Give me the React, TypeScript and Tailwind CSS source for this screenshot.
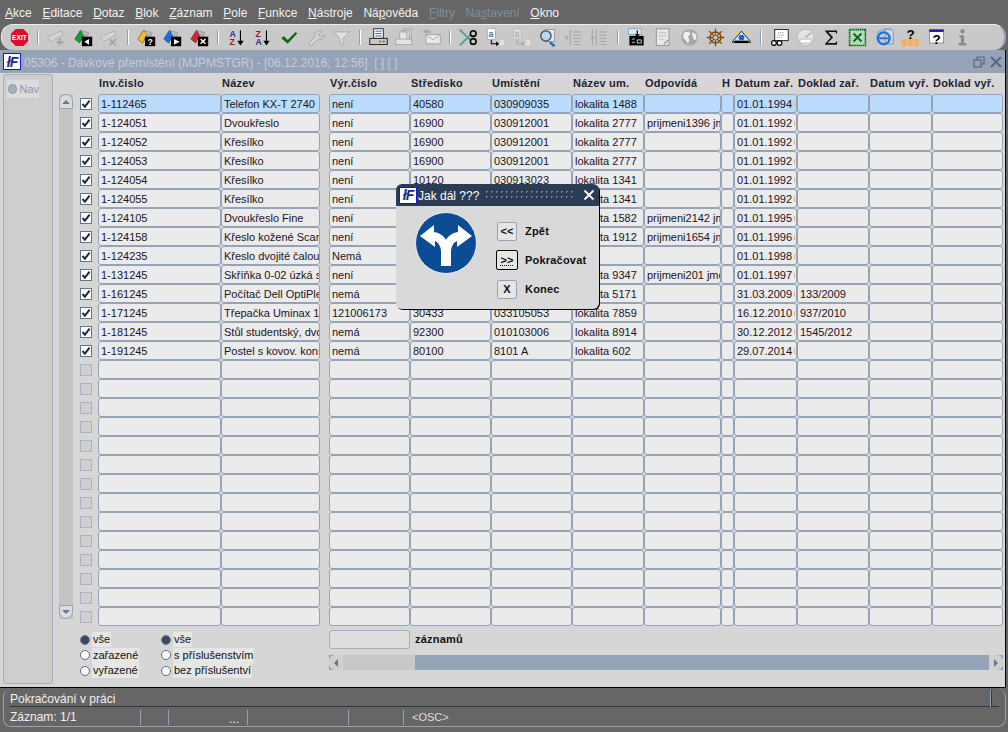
import React from 'react'

type Row = string[]

const ICON = 19

const menu: [string, string, string, boolean?][] = [
  ['', 'A', 'kce'], ['', 'E', 'ditace'], ['', 'D', 'otaz'], ['', 'B', 'lok'], ['', 'Z', 'áznam'], ['', 'P', 'ole'],
  ['', 'F', 'unkce'], ['', 'N', 'ástroje'], ['Ná', 'p', 'ověda'], ['', 'F', 'iltry', true], ['Na', 's', 'tavení', true], ['', 'O', 'kno'],
]

const columns = [
  { title: 'Inv.čislo', w: 'w-[123px]' },
  { title: 'Název', w: 'w-[99px] mr-[9px]' },
  { title: 'Výr.čislo', w: 'w-[81px]' },
  { title: 'Středisko', w: 'w-[81px]' },
  { title: 'Umístění', w: 'w-[81px]' },
  { title: 'Název um.', w: 'w-[72px]' },
  { title: 'Odpovídá', w: 'w-[77px]' },
  { title: 'H', w: 'w-[13px]' },
  { title: 'Datum zař.', w: 'w-[63px]' },
  { title: 'Doklad zař.', w: 'w-[72px]' },
  { title: 'Datum vyř.', w: 'w-[63px]' },
  { title: 'Doklad vyř.', w: 'w-[71px]' },
]

const rows: Row[] = [
  ['1-112465', 'Telefon KX-T 2740', 'není', '40580', '030909035', 'lokalita 1488', '', '', '01.01.1994', ''],
  ['1-124051', 'Dvoukřeslo', 'není', '16900', '030912001', 'lokalita 2777', 'prijmeni1396 jmeno', '', '01.01.1992', ''],
  ['1-124052', 'Křesílko', 'není', '16900', '030912001', 'lokalita 2777', '', '', '01.01.1992', ''],
  ['1-124053', 'Křesílko', 'není', '16900', '030912001', 'lokalita 2777', '', '', '01.01.1992', ''],
  ['1-124054', 'Křesílko', 'není', '10120', '030913023', 'lokalita 1341', '', '', '01.01.1992', ''],
  ['1-124055', 'Křesílko', 'není', '10120', '030913023', 'lokalita 1341', '', '', '01.01.1992', ''],
  ['1-124105', 'Dvoukřeslo Fine', 'není', '10120', '030913023', 'lokalita 1582', 'prijmeni2142 jmeno', '', '01.01.1995', ''],
  ['1-124158', 'Křeslo kožené Scandi', 'není', '10120', '030913023', 'lokalita 1912', 'prijmeni1654 jmeno', '', '01.01.1996', ''],
  ['1-124235', 'Křeslo dvojité čalounené', 'Nemá', '', '', '', '', '', '01.01.1998', ''],
  ['1-131245', 'Skříňka 0-02 úzká s dveřmi', 'není', '10120', '030913023', 'lokalita 9347', 'prijmeni201 jmeno', '', '01.01.1997', ''],
  ['1-161245', 'Počítač Dell OptiPlex 7010', 'nemá', '10120', '030913023', 'lokalita 5171', '', '', '31.03.2009', '133/2009'],
  ['1-171245', 'Třepačka Uminax 10', '121006173', '30433', '033105053', 'lokalita 7859', '', '', '16.12.2010', '937/2010'],
  ['1-181245', 'Stůl studentský, dvoumístný', 'nemá', '92300', '010103006', 'lokalita 8914', '', '', '30.12.2012', '1545/2012'],
  ['1-191245', 'Postel s kovov. konstrukcí', 'nemá', '80100', '8101 A', 'lokalita 602', '', '', '29.07.2014', ''],
]

const Logo = () => (
  <div className="w-[18px] h-[17px] shrink-0 bg-white border border-[#1818c8] flex items-center justify-center overflow-hidden">
    <span className="text-[#1a2a90] font-bold italic text-[14px] leading-none tracking-[-1px]">łF</span>
  </div>
)

const Card = ({ color, glyph }: { color: string, glyph: React.ReactNode }) => (
  <svg width={ICON} height={ICON} viewBox="0 0 24 24">
    <polygon points="1,14 8,3 14,7 7,19" fill={color} stroke="#222" strokeWidth="0.6" />
    <polygon points="9,3 19,6 17,11 12,9" fill="#b8b8b8" stroke="#444" strokeWidth="0.6" strokeDasharray="1 1" />
    <rect x="10" y="11" width="13" height="12" fill="#000" />
    {glyph}
  </svg>
)

const DimCard = ({ glyph }: { glyph: React.ReactNode }) => (
  <svg width={ICON} height={ICON} viewBox="0 0 24 24">
    <polygon points="1,12 18,4 20,9 4,17" fill="#dedede" stroke="#a8a8a8" strokeWidth="1" />
    <line x1="4" y1="14" x2="18" y2="8" stroke="#a8a8a8" strokeDasharray="2 1" />
    {glyph}
  </svg>
)

const Sort = ({ top, bottom, c1, c2 }: { top: string, bottom: string, c1: string, c2: string }) => (
  <svg width={ICON} height={ICON} viewBox="0 0 24 24" fontFamily="'Liberation Sans', sans-serif" fontWeight="700" fontSize="11">
    <text x="3" y="11" fill={c1}>{top}</text>
    <text x="3" y="22" fill={c2}>{bottom}</text>
    <line x1="17" y1="3" x2="17" y2="18" stroke="#000" strokeWidth="1.4" />
    <polygon points="13,16 21,16 17,22" fill="#000" />
  </svg>
)

const Svg = ({ children }: { children: React.ReactNode }) => (
  <svg width={ICON} height={ICON} viewBox="0 0 24 24">{children}</svg>
)

const Exit = () => (
  <svg width="19" height="19" viewBox="0 0 20 20">
    <polygon points="6,1 14,1 19,6 19,14 14,19 6,19 1,14 1,6" fill="#d8102c" />
    <text x="10" y="12.6" textAnchor="middle" fontSize="7" fontWeight="700" fill="#fff" fontFamily="'Liberation Sans', sans-serif">EXIT</text>
  </svg>
)

const AtoA = ({ dim }: { dim?: boolean }) => (
  <svg width={ICON} height={ICON} viewBox="0 0 24 24" fontFamily="'Liberation Sans', sans-serif" fontSize="11">
    <rect x="3" y="1" width="10" height="13" fill={dim ? '#d8d8d8' : '#fff'} stroke={dim ? '#b0b0b0' : '#888'} strokeWidth="0.6" />
    <text x="4.5" y="11" fill={dim ? '#a8a8a8' : '#2030c0'}>a</text>
    <path d="M8 15v5h7" fill="none" stroke={dim ? '#a8a8a8' : '#000'} strokeWidth="1.3" />
    <polygon points="14,17 18,20 14,23" fill={dim ? '#a8a8a8' : '#000'} />
    <text x="18" y="22" fill="#f4f4f4">a</text>
  </svg>
)

const ListIcon = ({ double }: { double?: boolean }) => (
  <Svg>
    <path d="M8 2v20M12 5h9M12 9h9M12 13h9M12 17h9M12 21h9" stroke="#a4a4a4" strokeWidth="1.2" fill="none" />
    <polygon points="2,9 6,12 2,15" fill="#a4a4a4" />
    {double && <path d="M3 2v20" stroke="#a4a4a4" strokeWidth="1.2" />}
  </Svg>
)

type Tool = React.ReactNode | 'sep'

const tools: Tool[] = [
  <Exit />,
  'sep',
  <DimCard glyph={<path d="M16 13v9M12 18h9" stroke="#a4a4a4" strokeWidth="2.4" />} />,
  <Card color="#10a030" glyph={<polygon points="19,14 19,21 13,17.5" fill="#fff" />} />,
  <DimCard glyph={<path d="M12 14l8 8M20 14l-8 8" stroke="#a4a4a4" strokeWidth="2" />} />,
  'sep',
  <Card color="#f4c020" glyph={<text x="16.5" y="21.5" textAnchor="middle" fontSize="11" fontWeight="700" fill="#fff" fontFamily="'Liberation Sans', sans-serif">?</text>} />,
  <Card color="#1870e8" glyph={<polygon points="14,14 21,17.5 14,21" fill="#fff" />} />,
  <Card color="#e02030" glyph={<path d="M13.5 14l6 6M19.5 14l-6 6" stroke="#fff" strokeWidth="1.8" />} />,
  'sep',
  <Sort top="A" bottom="Z" c1="#1a2ca0" c2="#b01828" />,
  <Sort top="Z" bottom="A" c1="#a01028" c2="#1a2ca0" />,
  <Svg><path d="M3 13l3-3 5 5L21 5l2 2-12 13z" fill="#0c6a18" /></Svg>,
  <Svg><path d="M20 4l-4 4 1 3 3 0 3-3c1 4-3 8-7 6L6 23l-3-3 9-10c-2-4 3-8 8-6z" fill="#d4d4d4" stroke="#9c9c9c" /></Svg>,
  <Svg><polygon points="2,5 22,5 14,13 14,21 10,19 10,13" fill="#e0e0e0" stroke="#a4a4a4" /></Svg>,
  'sep',
  <Svg>
    <rect x="6" y="1" width="12" height="12" fill="#fff" stroke="#000" />
    <path d="M8 4h8M8 7h8M8 10h8" stroke="#1830a0" />
    <rect x="1" y="13" width="22" height="8" fill="#c8c8c8" stroke="#000" />
    <path d="M13 17h2" stroke="#e02020" strokeWidth="2" /><path d="M15 17h2" stroke="#f0d020" strokeWidth="2" /><path d="M17 17h3" stroke="#20a030" strokeWidth="2" />
  </Svg>,
  <Svg>
    <rect x="12" y="1" width="9" height="11" fill="#d8d8d8" stroke="#a0a0a0" />
    <rect x="9" y="3" width="9" height="11" fill="#d8d8d8" stroke="#a0a0a0" />
    <rect x="6" y="5" width="9" height="10" fill="#e4e4e4" stroke="#a0a0a0" />
    <rect x="1" y="14" width="20" height="7" fill="#e4e4e4" stroke="#a0a0a0" />
  </Svg>,
  <Svg>
    <rect x="5" y="8" width="18" height="12" fill="#e8e8e8" stroke="#9c9c9c" />
    <path d="M5 8l9 7 9-7" fill="none" stroke="#9c9c9c" />
    <polygon points="1,4 6,1 6,3 11,3 11,6 6,6 6,8" fill="#a8a8a8" />
  </Svg>,
  'sep',
  <Svg>
    <path d="M1 2l14 14M1 22L15 8" stroke="#5a9c9c" strokeWidth="2.4" />
    <circle cx="18" cy="7" r="3.6" fill="none" stroke="#000" strokeWidth="2" />
    <circle cx="18" cy="17" r="3.6" fill="none" stroke="#000" strokeWidth="2" />
  </Svg>,
  <AtoA />,
  <AtoA dim />,
  <Svg>
    <rect x="9" y="2" width="12" height="15" fill="#e8e8e8" stroke="#909090" />
    <path d="M15 18l6 5" stroke="#1878c8" strokeWidth="3.4" />
    <circle cx="10" cy="10" r="6.5" fill="#b8d8f0" stroke="#404858" strokeWidth="1.6" />
  </Svg>,
  <ListIcon />,
  <ListIcon double />,
  'sep',
  <Svg>
    <rect x="2" y="1" width="16" height="7" fill="#e8e8e8" stroke="#60a8d8" />
    <rect x="3" y="10" width="18" height="12" fill="#000" />
    <path d="M6 14h4M6 18h4M13 15h5v4h-5z" stroke="#fff" fill="none" />
    <path d="M13 3v7" stroke="#000" strokeWidth="1.6" /><polygon points="10,8 16,8 13,12" fill="#000" />
  </Svg>,
  <Svg>
    <rect x="3" y="1" width="16" height="21" fill="#e8e8e8" stroke="#9c9c9c" strokeWidth="1.4" />
    <path d="M6 6h10M6 10h10M6 14h6" stroke="#b0b0b0" />
    <path d="M13 20l5-5" stroke="#8c8c8c" strokeWidth="1.6" />
  </Svg>,
  <Svg>
    <circle cx="12" cy="12" r="10.5" fill="#a8a8a8" />
    <path d="M5 6l6-2 2 4-3 3 2 4-2 5-3-5-3-3zM15 5l5 3 1 6-3 1-2-4z" fill="#f0f0f0" />
  </Svg>,
  <Svg>
    <circle cx="12" cy="12" r="7" fill="none" stroke="#804808" strokeWidth="1.8" />
    <path d="M12 1v22M1 12h22M4 4l16 16M20 4L4 20" stroke="#804808" strokeWidth="1.6" />
    <circle cx="12" cy="12" r="3" fill="#c8c8c8" stroke="#804808" />
  </Svg>,
  <Svg>
    <path d="M5 5l3 3M19 5l-3 3M12 1v3" stroke="#f0e020" strokeWidth="1.4" />
    <polygon points="12,4 24,18 0,18" fill="#d8e4e8" stroke="#000" />
    <circle cx="12" cy="12" r="3.6" fill="#1060f0" />
    <rect x="3" y="16" width="18" height="3" fill="#000" />
  </Svg>,
  'sep',
  <Svg>
    <rect x="6" y="2" width="17" height="14" fill="#fff" stroke="#000" />
    <path d="M10 6h8M9 9h9M9 12h5" stroke="#808080" strokeDasharray="1.4 1" />
    <circle cx="5" cy="19" r="3" fill="#fff" stroke="#000" strokeWidth="1.4" />
    <circle cx="12" cy="19" r="3" fill="#fff" stroke="#000" strokeWidth="1.4" />
  </Svg>,
  <Svg>
    <circle cx="12" cy="12" r="10.5" fill="#e4e4e4" stroke="#b0b0b0" />
    <path d="M12 12L19 6" stroke="#a0a0a0" strokeWidth="1.4" />
    <rect x="5" y="14" width="14" height="5" fill="#fff" stroke="#b0b0b0" />
  </Svg>,
  <Svg><path d="M4 3h15v5l-2-3H8l6 7-7 7h10l2-3v5H4v-1l7-8-7-8z" fill="#111" /></Svg>,
  <Svg>
    <rect x="2" y="2" width="20" height="20" fill="#b8d8b8" stroke="#0c6a28" strokeWidth="2" strokeDasharray="2 0.6" />
    <path d="M7 7l10 10M17 7L7 17" stroke="#0c6a28" strokeWidth="2.4" />
  </Svg>,
  <Svg>
    <path d="M13 1h7l3 3v16H13z" fill="#d8d8e8" stroke="#8080a0" />
    <circle cx="11" cy="13" r="7.5" fill="none" stroke="#1878d8" strokeWidth="3" />
    <path d="M5 13h12" stroke="#1878d8" strokeWidth="2.4" />
    <path d="M2 7c6-6 14-6 18-4" fill="none" stroke="#60a8e8" strokeWidth="1.2" />
  </Svg>,
  <Svg>
    <rect x="1" y="14" width="6" height="9" fill="#f0b060" />
    <rect x="17" y="14" width="6" height="9" fill="#f0b060" />
    <rect x="9" y="14" width="6" height="9" fill="#f0b060" />
    <text x="12" y="14" textAnchor="middle" fontSize="17" fontWeight="700" fill="#000" fontFamily="'Liberation Sans', sans-serif">?</text>
  </Svg>,
  <Svg>
    <rect x="3" y="2" width="18" height="17" fill="#fff" stroke="#808080" />
    <rect x="3" y="2" width="18" height="3" fill="#3010a0" />
    <text x="12" y="20" textAnchor="middle" fontSize="17" fontWeight="700" fill="#000" fontFamily="'Liberation Sans', sans-serif">?</text>
  </Svg>,
  <Svg>
    <circle cx="12" cy="4" r="2.8" fill="#8c8c8c" />
    <path d="M8 9h6v10h3v3H7v-3h3v-7H8z" fill="#8c8c8c" />
  </Svg>,
]

const Radio = ({ on, label }: { on?: boolean, label: string }) => (
  <div className="flex items-center h-[15.5px]">
    <span className="w-[10px] h-[10px] rounded-full border border-[#5c6c84] bg-white flex items-center justify-center shrink-0">
      {on && <span className="w-[8px] h-[8px] rounded-full bg-[#3c465c]" />}
    </span>
    <span className="ml-[2px] px-[1px] bg-[#e6e6e6] text-[11px] leading-[15px] text-[#111]">{label}</span>
  </div>
)

const Check = ({ on }: { on: boolean }) => (
  <div className={on ? 'w-[12px] h-[12px] border border-[#64748c] bg-white flex items-center justify-center' : 'w-[12px] h-[12px] border border-[#a9b3c2] bg-[#cfcfcf]'}>
    {on && (
      <svg width="10" height="10" viewBox="0 0 10 10">
        <path d="M1.5 5l2.4 2.6L8.6 1.6" fill="none" stroke="#1f2a3c" strokeWidth="2" />
      </svg>
    )}
  </div>
)

const DialogButton = ({ label, text, focused }: { label: string, text: string, focused?: boolean }) => (
  <div className="flex items-center h-[20px]">
    <div className={focused
      ? 'w-[22px] h-[20px] -ml-px mr-[7px] flex items-center justify-center bg-[#e6e6e6] border border-black rounded-[2px] text-[11px] font-bold underline decoration-dotted text-[#111]'
      : 'w-[20px] h-[19px] mr-[8px] flex items-center justify-center bg-[#e6e6e6] border border-[#94a3b8] rounded-[2px] text-[11px] font-bold text-[#111]'}
    >
      {label}
    </div>
    <span className="text-[11px] font-bold tracking-[0.2px] text-[#111]">{text}</span>
  </div>
)

export default function App() {
  return (
    <div className="w-[1008px] h-[732px] relative overflow-hidden flex flex-col bg-[#666666] font-['Liberation_Sans',Arial,sans-serif] text-[11px]">
      {/* menu */}
      <div className="h-[24px] pl-[5px] pt-[2px] flex items-center gap-[10.7px] text-[12px] text-[#f2f2f2] shrink-0">
        {menu.map(([pre, key, rest, dim], i) => (
          <span key={i} className={dim ? 'text-[#7f8e9e]' : ''}>
            {pre}
            <span className="underline">{key}</span>
            {rest}
          </span>
        ))}
      </div>

      {/* toolbar */}
      <div className="h-[26px] ml-px mr-[2px] pl-[4.5px] flex items-center rounded-[12px] bg-[#c9c9c9] border-t border-l border-t-[#eeeeee] border-l-[#eeeeee] border-r-2 border-r-[#94a3b8] shrink-0">
        {tools.map((t, i) => t === 'sep'
          ? (
              <div key={i} className="w-[11px] flex justify-center shrink-0">
                <div className="w-[2px] h-[15px] bg-[#8ea0b8] border-r border-r-white" />
              </div>
            )
          : (
              <div key={i} className="w-[26.25px] h-[24px] flex items-center justify-center shrink-0">{t}</div>
            ))}
      </div>

      {/* window */}
      <div className="h-[638px] flex flex-col mr-[2px] bg-[#d6d6d6] border-b border-b-black border-r border-r-black shrink-0">
        <div className="h-[23px] pl-[3px] pr-[3px] flex items-center bg-[#94a3b7] shrink-0">
          <Logo />
          <span className="ml-[3px] pt-[2px] text-[12px] text-[#c6ccd6] whitespace-pre">05306 - Dávkové přemístění (MJPMSTGR) - [06.12.2016; 12:56]  [ ] [ ]</span>
          <div className="ml-auto flex items-center gap-[5px]">
            <svg width="12" height="12" viewBox="0 0 12 12" fill="none" stroke="#5a6678" strokeWidth="1.2">
              <rect x="1" y="4" width="7" height="7" />
              <path d="M4 4V1h7v7H8" />
            </svg>
            <svg width="12" height="12" viewBox="0 0 12 12" stroke="#5a6678" strokeWidth="2">
              <path d="M1 1l10 10M11 1L1 11" />
            </svg>
          </div>
        </div>

        <div className="flex-1 flex min-h-0">
          {/* Nav panel */}
          <div className="w-[50px] ml-[3px] mt-px mb-[3px] rounded-[3px] border border-[#a4b0c0] bg-[#cecece] shrink-0 pt-[5px] pl-[3px]">
            <div className="w-[32px] h-[18px] bg-[#dcdcdc] flex items-center gap-[2px]">
              <span className="ml-px w-[10px] h-[10px] rounded-full border border-[#8c98a8] bg-[#a8b0bc]" />
              <span className="text-[11px] text-[#8a96a6]">Nav</span>
            </div>
          </div>

          <div className="flex-1 flex flex-col">
            {/* header */}
            <div className="h-[21px] pl-[45px] flex items-start pt-[2px] font-bold text-[11px] tracking-[0.2px] text-[#1d2433] shrink-0">
              {columns.map(c => (
                <div key={c.title} className={c.w + ' pl-[1px] whitespace-nowrap'}>{c.title}</div>
              ))}
            </div>

            {/* rows */}
            <div className="flex pl-[6px]">
              <div className="w-[14px] h-[525px] bg-[#c4c4c4] flex flex-col justify-between">
                <div className="h-[15px] bg-[#dcdcdc] rounded-t-[7px] border border-[#94a3b8] flex items-center justify-center">
                  <div className="w-0 h-0 border-x-[4px] border-x-transparent border-b-[4px] border-b-[#667890]" />
                </div>
                <div className="h-[14px] bg-[#dcdcdc] rounded-b-[7px] border border-[#94a3b8] flex items-center justify-center">
                  <div className="w-0 h-0 border-x-[4px] border-x-transparent border-t-[4px] border-t-[#667890]" />
                </div>
              </div>
              <div className="ml-[7px] flex flex-col">
                {Array.from({ length: 28 }).map((_, r) => {
                  const row = rows[r]
                  return (
                    <div key={r} className="flex items-center h-[19px]">
                      <div className="w-[18px] shrink-0"><Check on={!!row} /></div>
                      {columns.map((c, i) => (
                        <div key={c.title} className={c.w + (r === 0 ? ' bg-[#bbdcfd]' : ' bg-[#ebebeb]') + ' h-[19px] border border-[#94a3b8] rounded-[3px] pl-[2px] pt-px flex items-center overflow-hidden whitespace-nowrap text-[11px] text-[#1c1424]'}>
                          {row?.[i] ?? ''}
                          {row && i === 8 && <span className="ml-auto mr-px w-px h-[5px] bg-[#e8b070] shrink-0" />}
                        </div>
                      ))}
                    </div>
                  )
                })}
              </div>
            </div>

            {/* bottom */}
            <div className="flex pl-[27px]">
              <div className="w-[81px] pt-[6px]">
                <Radio on label="vše" />
                <Radio label="zařazené" />
                <Radio label="vyřazené" />
              </div>
              <div className="w-[168px] pt-[6px]">
                <Radio on label="vše" />
                <Radio label="s příslušenstvím" />
                <Radio label="bez příslušentví" />
              </div>
              <div className="w-[674px] pt-[3px]">
                <div className="flex items-center h-[20px]">
                  <div className="w-[81px] h-[19px] rounded-[3px] border border-[#a4b0c0] bg-[#dedede]" />
                  <span className="ml-[5px] font-bold text-[11px] tracking-[0.2px] text-[#111]">záznamů</span>
                </div>
                <div className="mt-[6px] h-[15px] flex bg-[#94a3b7]">
                  <div className="w-[14px] bg-[#d0d0d0] rounded-l-[6px] flex items-center justify-center">
                    <div className="w-0 h-0 border-y-[4px] border-y-transparent border-r-[4px] border-r-[#667890]" />
                  </div>
                  <div className="w-[72px] bg-[#c8c8c8]" />
                  <div className="ml-auto w-[14px] bg-[#d0d0d0] rounded-r-[6px] flex items-center justify-center">
                    <div className="w-0 h-0 border-y-[4px] border-y-transparent border-l-[4px] border-l-[#667890]" />
                  </div>
                </div>
              </div>
            </div>
          </div>
        </div>
      </div>

      {/* status */}
      <div className="h-[44px] pt-px pb-[5px] pl-[3px] pr-[2px] shrink-0">
        <div className="h-full rounded-[8px] border-l border-r border-b border-[#94a3b8] border-t-0 pl-[6px] pr-[6px] text-[12px] text-[#f0f0f0] flex flex-col">
          <div className="h-[18px] pt-[2px] flex items-center border-b border-b-[#2c3648] shrink-0">
            <span>Pokračování v práci</span>
            <div className="ml-auto mr-[7px] w-[2px] h-[17px] border-l border-l-[#94a3b8] border-r border-r-[#2c3648]" />
          </div>
          <div className="flex-1 pt-px flex items-center">
            <div className="w-[130px] shrink-0">Záznam: 1/1</div>
            <div className="w-[28px] h-[15px] border-l border-l-[#94a3b8] shrink-0" />
            <div className="w-[79px] h-[15px] border-l border-l-[#94a3b8] flex items-end justify-end pr-[8px] leading-none shrink-0">...</div>
            <div className="w-[101px] h-[15px] border-l border-l-[#94a3b8] shrink-0" />
            <div className="w-[55px] h-[15px] border-l border-l-[#94a3b8] shrink-0" />
            <div className="h-[15px] border-l border-l-[#94a3b8] pl-[8px] leading-[15px] text-[#dedede] text-[11px]">&lt;OSC&gt;</div>
          </div>
        </div>
      </div>

      {/* dialog */}
      <div className="absolute left-[396px] top-[184px] w-[203px] h-[125px] rounded-[6px] bg-[#d9d9d9] overflow-hidden shadow-[1px_1px_0_#000] flex flex-col">
        <div className="h-[22px] bg-[#2c3c55] flex items-center pl-[3px] pr-[4px] shrink-0">
          <Logo />
          <span className="ml-px pt-[2px] text-[12px] text-white whitespace-nowrap">Jak dál ???</span>
          <div className="ml-[5px] w-[90px] h-[12px] bg-[radial-gradient(circle,#76849a_1px,transparent_1px)] bg-[length:5px_5px]" />
          <svg className="ml-auto" width="12" height="12" viewBox="0 0 12 12" stroke="#fff" strokeWidth="1.8">
            <path d="M1.5 1.5l9 9M10.5 1.5l-9 9" />
          </svg>
        </div>
        <div className="flex-1 flex">
          <div className="w-[101px] pl-[19px] pt-[6px]">
            <svg width="62" height="62" viewBox="0 0 62 62">
              <circle cx="31" cy="31" r="30.5" fill="#0c4c94" stroke="#e8eef4" strokeWidth="1" />
              <path d="M26 54V40C26 35 24 31 20 29V35L5 24L19 13V20C25 21 29 24 31 28C33 24 37 21 43 20V13L57 24L42 35V29C38 31 36 35 36 40V54Z" fill="#fff" />
            </svg>
          </div>
          <div className="pt-[15px] flex flex-col gap-[9px]">
            <DialogButton label="<<" text="Zpět" />
            <DialogButton label=">>" text="Pokračovat" focused />
            <DialogButton label="X" text="Konec" />
          </div>
        </div>
      </div>
    </div>
  )
}
